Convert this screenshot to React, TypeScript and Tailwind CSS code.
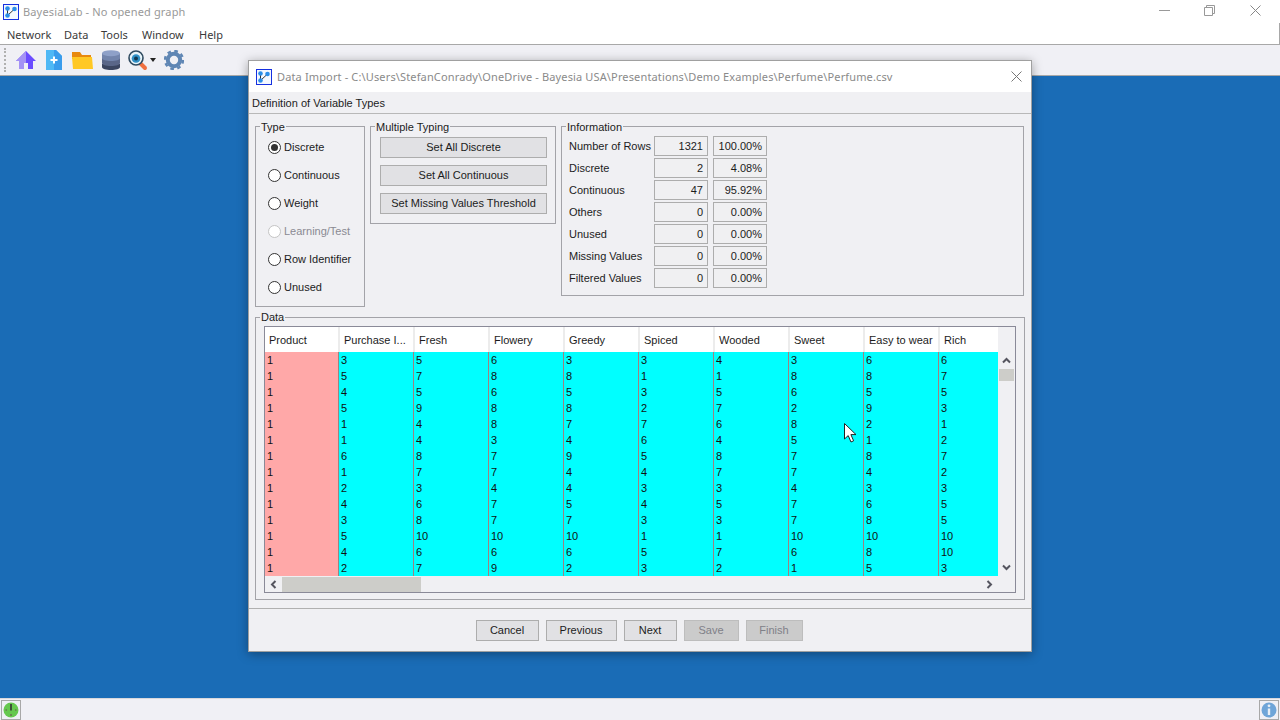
import React from 'react';

const columns = [
  { name: 'Product', values: [1, 1, 1, 1, 1, 1, 1, 1, 1, 1, 1, 1, 1, 1] },
  { name: 'Purchase I...', values: [3, 5, 4, 5, 1, 1, 6, 1, 2, 4, 3, 5, 4, 2] },
  { name: 'Fresh', values: [5, 7, 5, 9, 4, 4, 8, 7, 3, 6, 8, 10, 6, 7] },
  { name: 'Flowery', values: [6, 8, 6, 8, 8, 3, 7, 7, 4, 7, 7, 10, 6, 9] },
  { name: 'Greedy', values: [3, 8, 5, 8, 7, 4, 9, 4, 4, 5, 7, 10, 6, 2] },
  { name: 'Spiced', values: [3, 1, 3, 2, 7, 6, 5, 4, 3, 4, 3, 1, 5, 3] },
  { name: 'Wooded', values: [4, 1, 5, 7, 6, 4, 8, 7, 3, 5, 3, 1, 7, 2] },
  { name: 'Sweet', values: [3, 8, 6, 2, 8, 5, 7, 7, 4, 7, 7, 10, 6, 1] },
  { name: 'Easy to wear', values: [6, 8, 5, 9, 2, 1, 8, 4, 3, 6, 8, 10, 8, 5] },
  { name: 'Rich', values: [6, 7, 5, 3, 1, 2, 7, 2, 3, 5, 5, 10, 10, 3] },
];

const info = [
  ['Number of Rows', '1321', '100.00%'],
  ['Discrete', '2', '4.08%'],
  ['Continuous', '47', '95.92%'],
  ['Others', '0', '0.00%'],
  ['Unused', '0', '0.00%'],
  ['Missing Values', '0', '0.00%'],
  ['Filtered Values', '0', '0.00%'],
];

const types = ['Discrete', 'Continuous', 'Weight', 'Learning/Test', 'Row Identifier', 'Unused'];

const Logo = () => (
  <svg width="16" height="16" viewBox="0 0 16 16" className="shrink-0">
    <rect x="0.5" y="0.5" width="15" height="15" fill="#f4f8ff" stroke="#1530e0" />
    <path d="M4.5 4.5V11.5L11.5 5" fill="none" stroke="#333" strokeWidth="1" />
    <circle cx="4.5" cy="4.5" r="2.3" fill="#2b8ee8" />
    <circle cx="4.5" cy="11.5" r="2.3" fill="#2b8ee8" />
    <circle cx="11.5" cy="5" r="2.3" fill="#2b8ee8" />
  </svg>
);

const Group = ({ title, className, legend, children }: { title: string; className: string; legend: string; children: React.ReactNode }) => (
  <fieldset className={`border border-[#a3a3a8] ${className}`}>
    <legend className={`relative px-[1px] leading-[11px] text-[#1c1c1c] ${legend}`}>{title}</legend>
    {children}
  </fieldset>
);

const Radio = ({ label, checked, disabled }: { label: string; checked?: boolean; disabled?: boolean }) => (
  <div className={`flex h-[28px] items-center gap-[3px] ${disabled ? 'text-[#8a8a92]' : 'text-[#1c1c1c]'}`}>
    <span className={`flex h-[13px] w-[13px] items-center justify-center rounded-full border bg-white ${disabled ? 'border-[#c4c4c4]' : 'border-[#333]'}`}>
      {checked && <span className="h-[7px] w-[7px] rounded-full bg-[#333]" />}
    </span>
    {label}
  </div>
);

const WideButton = ({ label }: { label: string }) => (
  <div className="flex h-[21px] w-[167px] items-center justify-center border border-[#adadad] bg-[#e1e1e4] text-[#1c1c1c]">{label}</div>
);

const FootButton = ({ label, width, disabled }: { label: string; width: string; disabled?: boolean }) => (
  <div className={`flex h-[21px] items-center justify-center border ${width} ${disabled ? 'border-[#bdbdbd] bg-[#cbcbcb] text-[#808088]' : 'border-[#adadad] bg-[#e1e1e4] text-[#1c1c1c]'}`}>{label}</div>
);

const ValueBox = ({ value, width }: { value: string; width: string }) => (
  <div className={`flex h-[20px] items-center justify-end border border-[#adadad] bg-[#f0f0f2] pr-[4px] ${width}`}>{value}</div>
);

const Chevron = ({ d }: { d: string }) => (
  <svg width="9" height="9" viewBox="0 0 9 9">
    <path d={d} fill="none" stroke="#55555f" strokeWidth="2" />
  </svg>
);

export default function App() {
  return (
    <div className="relative flex h-[720px] w-[1280px] flex-col overflow-hidden bg-[#1a6cb6] text-[11px] font-['Liberation_Sans',Arial,sans-serif] leading-none">
      {/* main window chrome */}
      <div className="flex h-[23px] items-center bg-white pl-[3px]">
        <Logo />
        <span className="ml-[4px] font-['Noto_Sans',sans-serif] tracking-[0.15px] text-[#999]">BayesiaLab - No opened graph</span>
        <div className="ml-auto flex items-center pb-[2px]">
          <svg width="11" height="11" viewBox="0 0 11 11"><path d="M0 5.5H11" stroke="#999" /></svg>
          <svg width="11" height="11" viewBox="0 0 11 11" className="ml-[34px]"><path d="M.5 2.5H8.5V10.5H.5ZM2.5 2.5V.5H10.5V8.5H8.5" fill="none" stroke="#999" /></svg>
          <svg width="11" height="11" viewBox="0 0 11 11" className="ml-[35px] mr-[19px]"><path d="M.5.5L10.5 10.5M10.5.5L.5 10.5" stroke="#888" /></svg>
        </div>
      </div>
      <div className="flex h-[22px] items-center border-b border-r border-[#a8a8a8] bg-white pl-[7px] pt-[1px] font-['Noto_Sans',sans-serif] text-[#3a3a3a]">
        <span className="w-[57px]">Network</span>
        <span className="w-[37px]">Data</span>
        <span className="w-[41px]">Tools</span>
        <span className="w-[57px]">Window</span>
        <span>Help</span>
      </div>
      <div className="flex h-[31px] items-center border-b border-[#a8a8a8] bg-[#f0f0f5] pl-[4px]">
        <div className="h-[24px] w-[3px] border-l-2 border-dotted border-[#b0b0b0]" />
        <svg width="20" height="20" viewBox="0 0 20 20" className="ml-[9px]">
          <path d="M10 1L0 11H3V19H8V13H12V19H17V11H20Z" fill="#6b4cff" />
          <path d="M10 1L0 11H3V19H8V13H10Z" fill="#a492f5" />
        </svg>
        <svg width="16" height="20" viewBox="0 0 16 20" className="ml-[10px]">
          <path d="M0 0H10L16 6V20H0Z" fill="#4fb8f5" />
          <path d="M8 0H10L16 6V20H8Z" fill="#3a9cec" />
          <path d="M8 6.5V13.5M4.5 10H11.5" stroke="#fff" strokeWidth="2" />
        </svg>
        <svg width="21" height="19" viewBox="0 0 21 19" className="ml-[10px]">
          <path d="M0 1H8L10 4H19V8H0Z" fill="#e8890f" />
          <path d="M0 6H20L21 18H1Z" fill="#ffc825" />
        </svg>
        <svg width="18" height="20" viewBox="0 0 18 20" className="ml-[9px]">
          <path d="M0 14H18V17C18 19 14 20 9 20S0 19 0 17Z" fill="#3b4560" />
          <path d="M0 8H18V13C18 15 14 16 9 16S0 15 0 13Z" fill="#5a6688" />
          <path d="M0 3H18V8C18 10 14 11 9 11S0 10 0 8Z" fill="#7284ac" />
          <ellipse cx="9" cy="3.2" rx="9" ry="3" fill="#8ea0c8" />
        </svg>
        <svg width="21" height="21" viewBox="0 0 21 21" className="ml-[8px]">
          <path d="M12 13L17 18" stroke="#f07040" strokeWidth="4" strokeLinecap="round" />
          <circle cx="8" cy="8" r="7" fill="#e8f4fa" stroke="#2f4a60" strokeWidth="1.6" />
          <circle cx="8" cy="8.5" r="4.3" fill="#2f8fc6" />
          <circle cx="8" cy="8.5" r="2" fill="#14384f" />
        </svg>
        <svg width="6" height="4" viewBox="0 0 6 4" className="ml-[1px]"><path d="M0 0H6L3 4Z" fill="#222" /></svg>
        <svg width="20" height="20" viewBox="0 0 20 20" className="ml-[8px]">
          <circle cx="10" cy="10" r="6.2" fill="none" stroke="#5f86b4" strokeWidth="4" />
          <circle cx="10" cy="10" r="9" fill="none" stroke="#5f86b4" strokeWidth="2.4" strokeDasharray="3.6 3.47" />
        </svg>
      </div>
      <div className="flex-1" />
      <div className="flex h-[22px] items-center justify-between border-t border-[#d8d8dc] bg-[#f0f0f5] px-[1px]">
        <div className="flex h-[20px] w-[20px] items-center justify-center border border-[#a8a8a8]">
          <svg width="16" height="16" viewBox="0 0 16 16">
            <circle cx="8" cy="8" r="7.5" fill="#66c84e" />
            <path d="M8 2V8.5" stroke="#333" strokeWidth="1.6" />
            <path d="M2.5 8H4M12 8H13.5M8 12V14" stroke="#6a7a50" strokeWidth="1.6" />
          </svg>
        </div>
        <div className="flex h-[20px] w-[20px] items-center justify-center border border-[#a8a8a8]">
          <svg width="16" height="16" viewBox="0 0 16 16">
            <circle cx="8" cy="8" r="7.5" fill="#6fa5d8" />
            <path d="M8 6.5V13" stroke="#e8eef5" strokeWidth="2.4" />
            <circle cx="8" cy="3.8" r="1.4" fill="#e8eef5" />
          </svg>
        </div>
      </div>

      {/* import dialog */}
      <div className="absolute left-[248px] top-[60px] flex h-[592px] w-[784px] flex-col border border-[#a0a0a0] bg-[#f0f0f3] text-[#1c1c1c] shadow-[0_2px_10px_rgba(0,0,0,0.35)]">
        <div className="flex h-[31px] shrink-0 items-center bg-white pl-[7px]">
          <Logo />
          <span className="ml-[5px] font-['Noto_Sans',sans-serif] tracking-[0.14px] text-[#8a8a8a]">Data Import - C:\Users\StefanConrady\OneDrive - Bayesia USA\Presentations\Demo Examples\Perfume\Perfume.csv</span>
          <svg width="11" height="11" viewBox="0 0 11 11" className="ml-auto mr-[9px]"><path d="M.5.5L10.5 10.5M10.5.5L.5 10.5" stroke="#777" /></svg>
        </div>
        <div className="flex h-[22px] shrink-0 items-center border-b border-[#b8b8b8] pl-[3px] pt-[1px]">Definition of Variable Types</div>

        <div className="flex shrink-0 gap-[5px] pl-[6px] pr-[7px] pt-[7px]">
          <Group title="Type" legend="ml-[-8px] top-[1px]" className="h-[186px] w-[110px] pl-[12px] pt-[1px]">
            {types.map((t, i) => (
              <Radio key={t} label={t} checked={i === 0} disabled={i === 3} />
            ))}
          </Group>
          <Group title="Multiple Typing" legend="ml-[-5px] top-[1px]" className="flex h-[103px] w-[186px] flex-col gap-[7px] pl-[9px] pt-[5px]">
            <WideButton label="Set All Discrete" />
            <WideButton label="Set All Continuous" />
            <WideButton label="Set Missing Values Threshold" />
          </Group>
          <Group title="Information" legend="ml-[-3px] top-[1px]" className="flex h-[175px] w-[463px] flex-col gap-[2px] pl-[7px] pt-[4px]">
            {info.map(([label, count, pct]) => (
              <div key={label} className="flex items-center">
                <span className="w-[85px] whitespace-nowrap">{label}</span>
                <ValueBox value={count} width="w-[54px]" />
                <span className="w-[5px]" />
                <ValueBox value={pct} width="w-[54px]" />
              </div>
            ))}
          </Group>
        </div>

        <Group title="Data" legend="ml-[-4px]" className="ml-[6px] mr-[8px] mt-[5px] h-[288px] shrink-0 px-[8px] pt-[3px]">
          <div className="flex h-[267px] w-[752px] flex-col border border-[#8a8a98] bg-[#f0f0f3]">
            <div className="flex min-h-0 flex-1">
              <div className="w-[733px] overflow-hidden bg-white">
                <div className="flex">
                  {columns.map((c, i) => (
                    <div key={c.name} className={`shrink-0 ${i === 9 ? 'w-[60px]' : i === 0 ? 'w-[73px]' : 'w-[75px]'}`}>
                      <div className={`flex h-[25px] items-center whitespace-nowrap pl-[4px] pt-[1px] ${i === 0 ? '' : 'border-l-2 border-[#ececec]'}`}>{c.name}</div>
                      <div className={`flex h-[224px] flex-col ${i === 0 ? 'bg-[#ffa8a8] pl-[2px]' : 'border-l border-[#a08080] bg-[#00ffff] pl-[2px]'}`}>
                        {c.values.map((v, r) => (
                          <div key={r} className="flex h-[16px] shrink-0 items-center text-[#111]">{v}</div>
                        ))}
                      </div>
                    </div>
                  ))}
                </div>
              </div>
              <div className="flex w-[17px] flex-col items-center">
                <div className="mt-[29px]"><Chevron d="M1 6.5L4.5 3L8 6.5" /></div>
                <div className="mt-[4px] h-[12px] w-[15px] bg-[#cdcdc9]" />
                <div className="mt-auto mb-[4px]"><Chevron d="M1 2.5L4.5 6L8 2.5" /></div>
              </div>
            </div>
            <div className="flex h-[16px] shrink-0 items-center">
              <div className="ml-[4px]"><Chevron d="M6.5 1L3 4.5L6.5 8" /></div>
              <div className="ml-[4px] h-[15px] w-[139px] bg-[#cdcdc9]" />
              <div className="ml-auto mr-[21px]"><Chevron d="M2.5 1L6 4.5L2.5 8" /></div>
            </div>
          </div>
        </Group>

        <div className="mt-[8px] flex flex-1 items-start justify-center gap-[7px] border-t border-[#b0b0b0] pt-[11px] pr-[2px]">
          <FootButton label="Cancel" width="w-[63px]" />
          <FootButton label="Previous" width="w-[71px]" />
          <FootButton label="Next" width="w-[53px]" />
          <FootButton label="Save" width="w-[55px]" disabled />
          <FootButton label="Finish" width="w-[57px]" disabled />
        </div>
      </div>

      {/* mouse pointer */}
      <svg width="13" height="20" viewBox="0 0 13 20" className="absolute left-[844px] top-[423px]">
        <path d="M.5.5V16L4.2 12.6L7 19L9.6 17.8L6.9 11.6H12Z" fill="#fff" stroke="#222" />
      </svg>
    </div>
  );
}
